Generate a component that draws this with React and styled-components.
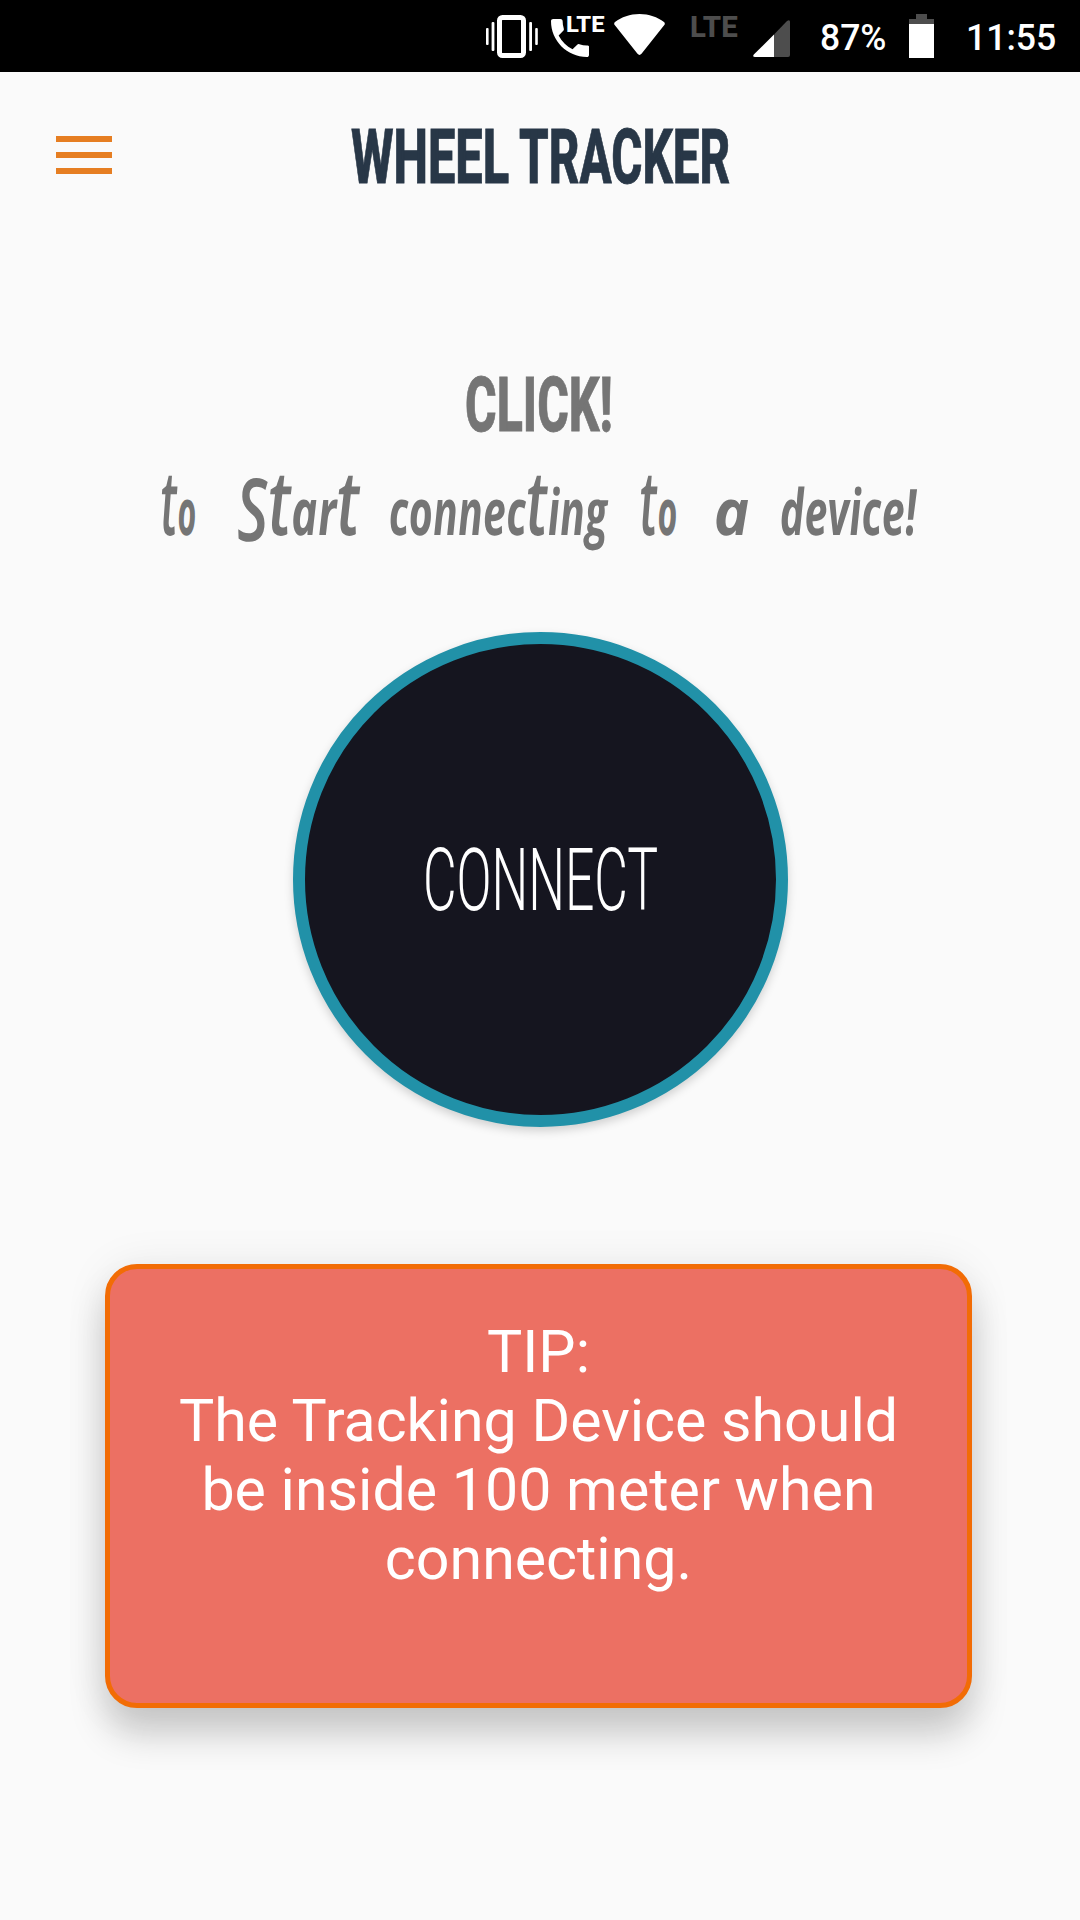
import React, { useLayoutEffect, useRef, useState } from "react";
import styled, { createGlobalStyle } from "styled-components";

const GlobalStyle = createGlobalStyle`
  * { box-sizing: border-box; }
  body { margin: 0; background: #fafafa; font-family: Roboto, "Liberation Sans", sans-serif; }
`;

const Screen = styled.div`
  width: 1080px;
  height: 1920px;
  overflow: hidden;
  background: #fafafa;
  display: flex;
  flex-direction: column;
`;

const FitBox = styled.span`
  display: block;
  flex: none;
  width: ${(p) => p.$width}px;
  height: ${(p) => p.$size}px;
  font-family: ${(p) => p.$family || "Roboto, sans-serif"};
  font-style: ${(p) => (p.$italic ? "italic" : "normal")};
  font-size: ${(p) => p.$size}px;
  line-height: ${(p) => p.$size}px;
  font-weight: ${(p) => p.$weight};
  font-variant-ligatures: none;
  color: ${(p) => p.$color};
  -webkit-text-stroke: ${(p) => p.$stroke || 0}px ${(p) => p.$color};
  white-space: nowrap;
`;

const FitInner = styled.span`
  display: inline-block;
  transform-origin: 0 80%;
`;

// Condenses a run of text so that it fills exactly the given width.
function FitText({ children, skew = 0, ...rest }) {
  const ref = useRef(null);
  const [scale, setScale] = useState(1);
  useLayoutEffect(() => {
    setScale(rest.$width / ref.current.offsetWidth);
  }, [rest.$width]);
  return (
    <FitBox {...rest}>
      <FitInner ref={ref} style={{ transform: `skewX(${skew}deg) scaleX(${scale})` }}>
        {children}
      </FitInner>
    </FitBox>
  );
}

const StatusBar = styled.div`
  height: 72px;
  flex: none;
  background: #000;
  display: flex;
  justify-content: flex-end;
  align-items: flex-start;
  padding-right: 24px;
`;

const StatusIcon = styled.svg`
  display: block;
  flex: none;
  margin-right: ${(p) => p.$gap}px;
`;

const CallGroup = styled.div`
  position: relative;
  width: 53px;
  height: 72px;
  margin-right: 10px;
  padding-top: 19px;
`;

const CallBadge = styled.div`
  position: absolute;
  left: 15px;
  top: 13px;
`;

const NetworkLabel = styled.div`
  padding-top: 12px;
  margin-right: 15px;
`;

const StatusText = styled.div`
  padding-top: 20px;
  margin-right: ${(p) => p.$gap || 0}px;
`;

const Header = styled.header`
  display: grid;
  grid-template-columns: 1fr auto 1fr;
  align-items: start;
  padding: 47px 56px 0;
  height: 295px;
  flex: none;
`;

const MenuButton = styled.button`
  border: 0;
  background: none;
  padding: 17px 0 0;
  width: 56px;
  display: flex;
  flex-direction: column;
  gap: 10px;
`;

const MenuBar = styled.span`
  height: 6px;
  width: 56px;
  background: #e67e22;
`;

const Title = styled.h1`
  margin: 0;
  display: flex;
  gap: 10px;
`;

const Main = styled.main`
  display: flex;
  flex-direction: column;
  align-items: center;
`;

const Prompt = styled.div`
  display: flex;
  flex-direction: column;
  align-items: center;
  margin-right: 2px;
`;

const ScriptLine = styled.div`
  display: flex;
  margin-top: 36px;
`;

const Word = styled.span`
  margin-left: ${(p) => p.$before}px;
`;

const TallT = styled.span`
  font-size: 1.4em;
  font-weight: 600;
  line-height: 0;
`;

const SwashS = styled.span`
  font-size: 1.36em;
  font-weight: 600;
  line-height: 0;
  vertical-align: -6px;
`;

const ConnectButton = styled.button`
  width: 495px;
  height: 495px;
  margin: 89px 0 0 1px;
  padding: 2px 1px 0 0;
  border: 12px solid #2191a8;
  border-radius: 50%;
  background: #15151f;
  display: flex;
  align-items: center;
  justify-content: center;
  box-shadow: 0 4px 10px rgba(0, 0, 0, 0.17);
`;

const TipCard = styled.section`
  width: 867px;
  height: 444px;
  margin: 137px 3px 0 0;
  padding: 48px 50px 0;
  border: 5px solid #f26c05;
  border-radius: 32px;
  background: #ec7063;
  box-shadow: 0 27px 36px rgba(0, 0, 0, 0.18), 0 2px 44px rgba(0, 0, 0, 0.08);
`;

const TipText = styled.p`
  margin: 0 -4px;
  color: #fff;
  font-size: 59.1px;
  line-height: 69px;
  text-align: center;
`;

const words = [
  { text: "to", width: 36, before: 0 },
  { text: "Start", width: 123, before: 40 },
  { text: "connecting", width: 219, before: 29 },
  { text: "to", width: 38, before: 32 },
  { text: "a", width: 36, before: 36 },
  { text: "device!", width: 137, before: 30 },
];

function renderLetters(text) {
  return text.split(/([tS])/).map((part, i) => {
    if (part === "t") return <TallT key={i}>t</TallT>;
    if (part === "S") return <SwashS key={i}>S</SwashS>;
    return part;
  });
}

export default function App() {
  return (
    <Screen>
      <GlobalStyle />
      <StatusBar>
        <StatusIcon $gap={13} width="52" height="72" viewBox="0 0 52 72" fill="#fff">
          <rect x="13.5" y="17.5" width="24" height="38" rx="3" fill="none" stroke="#fff" strokeWidth="5" />
          <rect x="0" y="28" width="2.6" height="17" rx="1" />
          <rect x="5.6" y="22" width="2.8" height="29" rx="1" />
          <rect x="43.2" y="22" width="2.8" height="29" rx="1" />
          <rect x="49.2" y="28" width="2.6" height="17" rx="1" />
        </StatusIcon>
        <CallGroup>
          <StatusIcon $gap={0} width="38" height="38" viewBox="3 3 18 18" fill="#fff">
            <path d="M6.62 10.79c1.44 2.83 3.76 5.14 6.59 6.59l2.2-2.2c.27-.27.67-.36 1.02-.24 1.12.37 2.33.57 3.57.57.55 0 1 .15 1 .5V20c0 .55-.45 1-1 1-9.39 0-17-7.61-17-17 0-.55.45-1 1-1h3.500c.55 0 1 .45 1 1 0 1.250.2 2.450.57 3.570.11.350.030.740-.250 1.020l-2.200 2.200z" />
          </StatusIcon>
          <CallBadge>
            <FitText $size={22.5} $width={39} $weight={800} $color="#fff">LTE</FitText>
          </CallBadge>
        </CallGroup>
        <StatusIcon $gap={25} width="51" height="72" viewBox="0 0 51 72" fill="#fff">
          <path d="M25.5 14C16 14 7.500 17 1 22Q-.5 23.500 .7 25L23.500 53.800Q25.500 56 27.500 53.800L50.300 25Q51.500 23.500 50 22C43.500 17 35 14 25.500 14Z" />
        </StatusIcon>
        <NetworkLabel>
          <FitText $size={30} $width={48} $weight={800} $color="#4d4d4d">LTE</FitText>
        </NetworkLabel>
        <StatusIcon $gap={30} width="37" height="72" viewBox="0 0 37 72">
          <path d="M21 34.500L34 21Q37 19 37 22V55Q37 57 35 57H21Z" fill="#4d4d4d" />
          <path d="M21 34.500L.8 54.500Q-.8 57 2 57H21Z" fill="#fff" />
        </StatusIcon>
        <StatusText $gap={23}>
          <FitText $size={36} $width={66} $weight={500} $color="#fff">87%</FitText>
        </StatusText>
        <StatusIcon $gap={32} width="25" height="72" viewBox="0 0 25 72">
          <path d="M7 14H18V19H25V24H0V19H7Z" fill="#4d4d4d" />
          <path d="M0 24H25V58H0Z" fill="#fff" />
        </StatusIcon>
        <StatusText>
          <FitText $size={36} $width={90} $weight={500} $color="#fff">11:55</FitText>
        </StatusText>
      </StatusBar>

      <Header>
        <MenuButton aria-label="Menu">
          <MenuBar />
          <MenuBar />
          <MenuBar />
        </MenuButton>
        <Title>
          <FitText $size={76} $width={158} $weight={800} $color="#283747" $stroke={0.8}>WHEEL</FitText>
          <FitText $size={76} $width={211} $weight={800} $color="#283747" $stroke={0.8}>TRACKER</FitText>
        </Title>
      </Header>

      <Main>
        <Prompt>
          <FitText $size={76} $width={148} $weight={800} $color="#757575" $stroke={0.8}>CLICK!</FitText>
          <ScriptLine>
            {words.map((w, i) => (
              <Word key={i} $before={w.before}>
                <FitText
                  $family={'"Open Sans", "Noto Sans", sans-serif'}
                  $italic
                  $size={64}
                  $width={w.width}
                  $weight={700}
                  $color="#757575"
                  skew={2}
                >
                  {renderLetters(w.text)}
                </FitText>
              </Word>
            ))}
          </ScriptLine>
        </Prompt>
        <ConnectButton>
          <FitText $size={87.5} $width={235} $weight={300} $color="#fff">CONNECT</FitText>
        </ConnectButton>
        <TipCard>
          <TipText>
            TIP:
            <br />
            The Tracking Device should be inside 100 meter when connecting.
          </TipText>
        </TipCard>
      </Main>
    </Screen>
  );
}
